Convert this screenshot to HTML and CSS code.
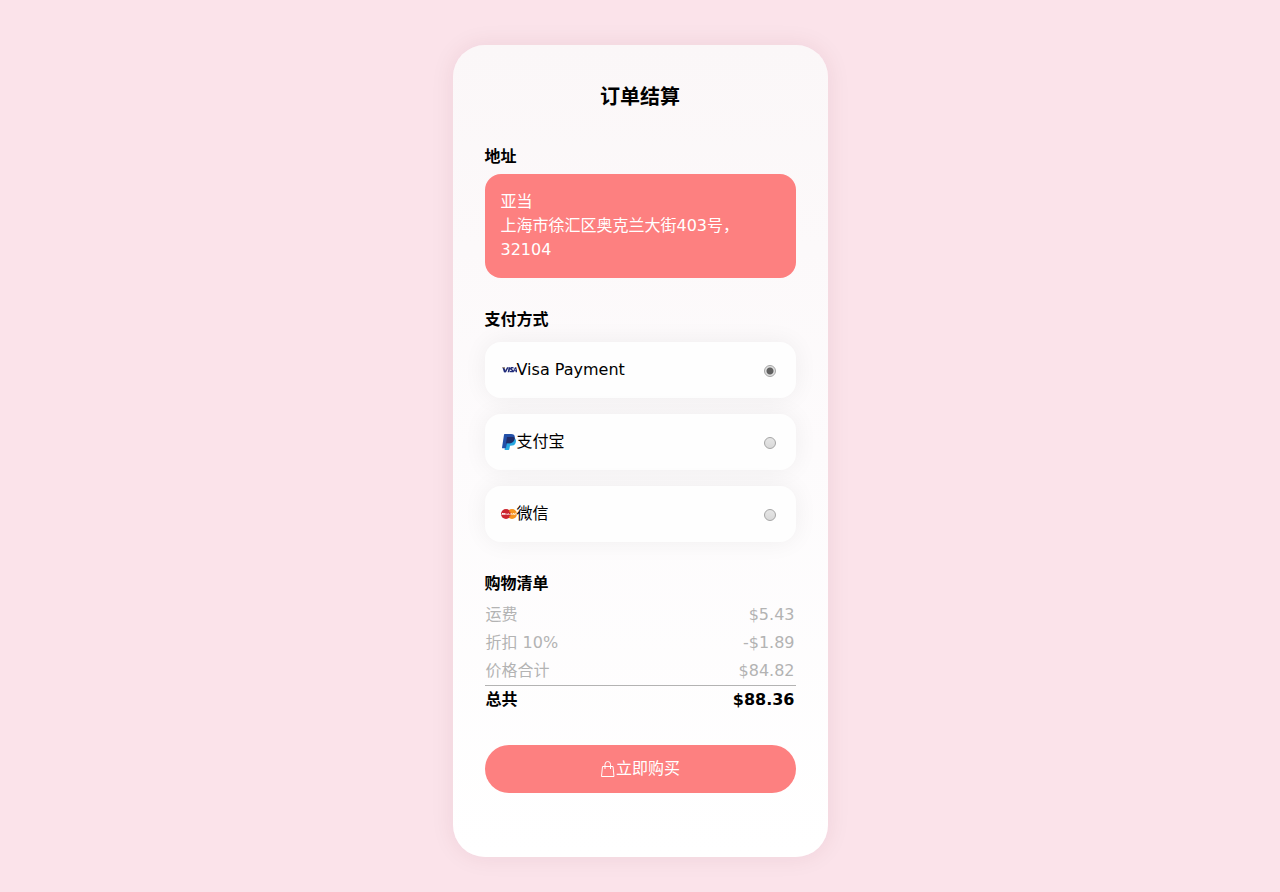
FILE: index.html
```html
<!DOCTYPE html>
<html lang="zh-CN">
<head>
    <meta charset="UTF-8">
    <meta name="viewport" content="width=device-width, initial-scale=1.0">
    <title>订单结算</title>
    <link rel="stylesheet" href="styles.css">
</head>
<body>
    <main class="checkout">
        <h1>订单结算</h1>

        <form class="checkout-form">
            <section>
                <h2>地址</h2>
                <address class="address-card">
                    亚当<br>
                    上海市徐汇区奥克兰大街403号，32104
                </address>
            </section>

            <section>
                <h2 id="payTitle">支付方式</h2>
                <div class="payments" role="radiogroup" aria-labelledby="payTitle">
                    <label class="payment" for="visa">
                        <svg class="icon" viewBox="0 0 48 48" aria-hidden="true">
                            <path d="M4 16h7l3 15H9z" fill="#1f2a78"/>
                            <path d="M3 16h7l2 6q-3-4-9-6z" fill="#c9a646"/>
                            <path d="M10 31l8-15h5l-8 15z" fill="#1f2a78"/>
                            <path d="M20 31l3-15h5l-3 15z" fill="#1f2a78"/>
                            <path d="M38 16l-1 4q-5-2-5 0c0 2 5 2 5 6 0 5-5 6-11 4l1-4q5 2 5 0c0-2-5-2-5-6 0-5 6-6 11-4z" fill="#1f2a78"/>
                            <path d="M34 31l8-15h4l3 15h-5v-3h-5l-1 3zM40 25h4l-1-5z" fill="#1f2a78"/>
                        </svg>
                        <span>Visa Payment</span>
                        <input type="radio" name="payment" id="visa" checked>
                    </label>
                    <label class="payment" for="alipay">
                        <svg class="icon" viewBox="0 0 48 48" aria-hidden="true">
                            <path d="M40 11c5 4 6 9 4 15-2 7-8 9-15 9h-2l-2 10q0 3-3 3h-9q-3 0-2-3l5-26z" fill="#28a8e0"/>
                            <path d="M11 0h19c9 0 13 5 11 14-2 10-9 14-18 14h-5l-3 13q0 2-3 2H5q-2 0-2-2L9 2q0-2 2-2z" fill="#2350a8"/>
                            <path d="M18 9h19q3 1 4 3c-1 11-8 16-18 16h-8z" fill="#202c68"/>
                        </svg>
                        <span>支付宝</span>
                        <input type="radio" name="payment" id="alipay">
                    </label>
                    <label class="payment" for="wechat">
                        <svg class="icon" viewBox="0 0 48 48" aria-hidden="true">
                            <circle cx="33" cy="24" r="15" fill="#f7941e"/>
                            <circle cx="15" cy="24" r="15" fill="#cc2530"/>
                            <path d="M24 12c8 6 8 18 0 24M24 17h5M24 31h5" fill="none" stroke="#f7941e" stroke-width="2"/>
                            <path d="M3 27l2-6 2 4 3-4-1 6M12 26l2-3 2 3M18 23l2 3M22 22v4M26 26l2-3M32 22q-4 2-1 4M35 26l2-4 2 4M42 22l-2 4M45 20v6" fill="none" stroke="#fff" stroke-width="3"/>
                        </svg>
                        <span>微信</span>
                        <input type="radio" name="payment" id="wechat">
                    </label>
                </div>
            </section>

            <section>
                <h2>购物清单</h2>
                <table class="bill">
                    <tbody>
                        <tr>
                            <td>运费</td>
                            <td>$5.43</td>
                        </tr>
                        <tr>
                            <td>折扣 10%</td>
                            <td>-$1.89</td>
                        </tr>
                        <tr>
                            <td>价格合计</td>
                            <td>$84.82</td>
                        </tr>
                    </tbody>
                    <tfoot>
                        <tr>
                            <td>总共</td>
                            <td>$88.36</td>
                        </tr>
                    </tfoot>
                </table>
            </section>

            <button class="buy" type="button">
                <svg class="icon" viewBox="0 0 16 16" aria-hidden="true">
                    <path d="M2.5 5.5h10.500l1 10h-12.500zM5 8V3.500a2.750 3 0 0 1 5.500 0V8" fill="none" stroke="currentColor"/>
                </svg>
                <span>立即购买</span>
            </button>
        </form>
    </main>
</body>
</html>
```

FILE: styles.css
```css
* {
    box-sizing: border-box;
}
body {
    margin: 0;
    padding: 45px 16px 35px;
    background-color: #fbe3ea;
    font-family: "DejaVu Sans", "Noto Sans CJK SC", sans-serif;
    font-size: 16px;
    line-height: 24px;
    color: #000;
}
.checkout {
    max-width: 375px;
    margin: 0 auto;
    padding: 32px 32px 64px;
    border-radius: 32px;
    background: linear-gradient(#fbf7f8, #fdfbfc 50%, #fff);
    box-shadow: 0 0 24px rgba(87, 0, 40, 0.08);
}
h1 {
    margin: 0 0 29px;
    font-size: 20px;
    line-height: 40px;
    text-align: center;
}
h2 {
    margin: 0 0 6px;
    font-size: 16px;
    line-height: 22px;
}
.checkout-form {
    display: flex;
    flex-direction: column;
    gap: 31px;
}
.address-card {
    padding: 16px;
    border-radius: 16px;
    background-color: #fd8080;
    color: #fff;
    font-style: normal;
}
.payments {
    display: flex;
    flex-direction: column;
    gap: 16px;
    padding-top: 5px;
}
.payment {
    display: flex;
    align-items: center;
    padding: 16px 20px 16px 16px;
    border-radius: 16px;
    background-color: #fefefe;
    box-shadow: 0 0 24px rgba(0, 0, 0, 0.06);
    cursor: pointer;
}
.icon {
    width: 16px;
    height: 16px;
    flex: none;
}
.payment input {
    appearance: none;
    width: 12px;
    height: 12px;
    margin: 2px 0 0 auto;
    border: 1px solid #a5a5a5;
    border-radius: 50%;
    background: linear-gradient(#e6e6e6, #d9d9d9);
}
.payment input:checked {
    background: radial-gradient(circle, #606060 3px, #e0e0e0 4px);
}
.bill {
    width: 100%;
    border-collapse: collapse;
    color: #b3b3b3;
}
.bill td {
    padding: 2px 1px;
}
.bill td:last-child {
    text-align: right;
}
.bill tfoot {
    border-top: 1px solid #b3b3b3;
    color: #000;
    font-weight: bold;
}
.buy {
    display: flex;
    align-items: center;
    justify-content: center;
    padding: 12px;
    border: none;
    border-radius: 24px;
    background-color: #fd8080;
    color: #fff;
    font: inherit;
    cursor: pointer;
}
```
